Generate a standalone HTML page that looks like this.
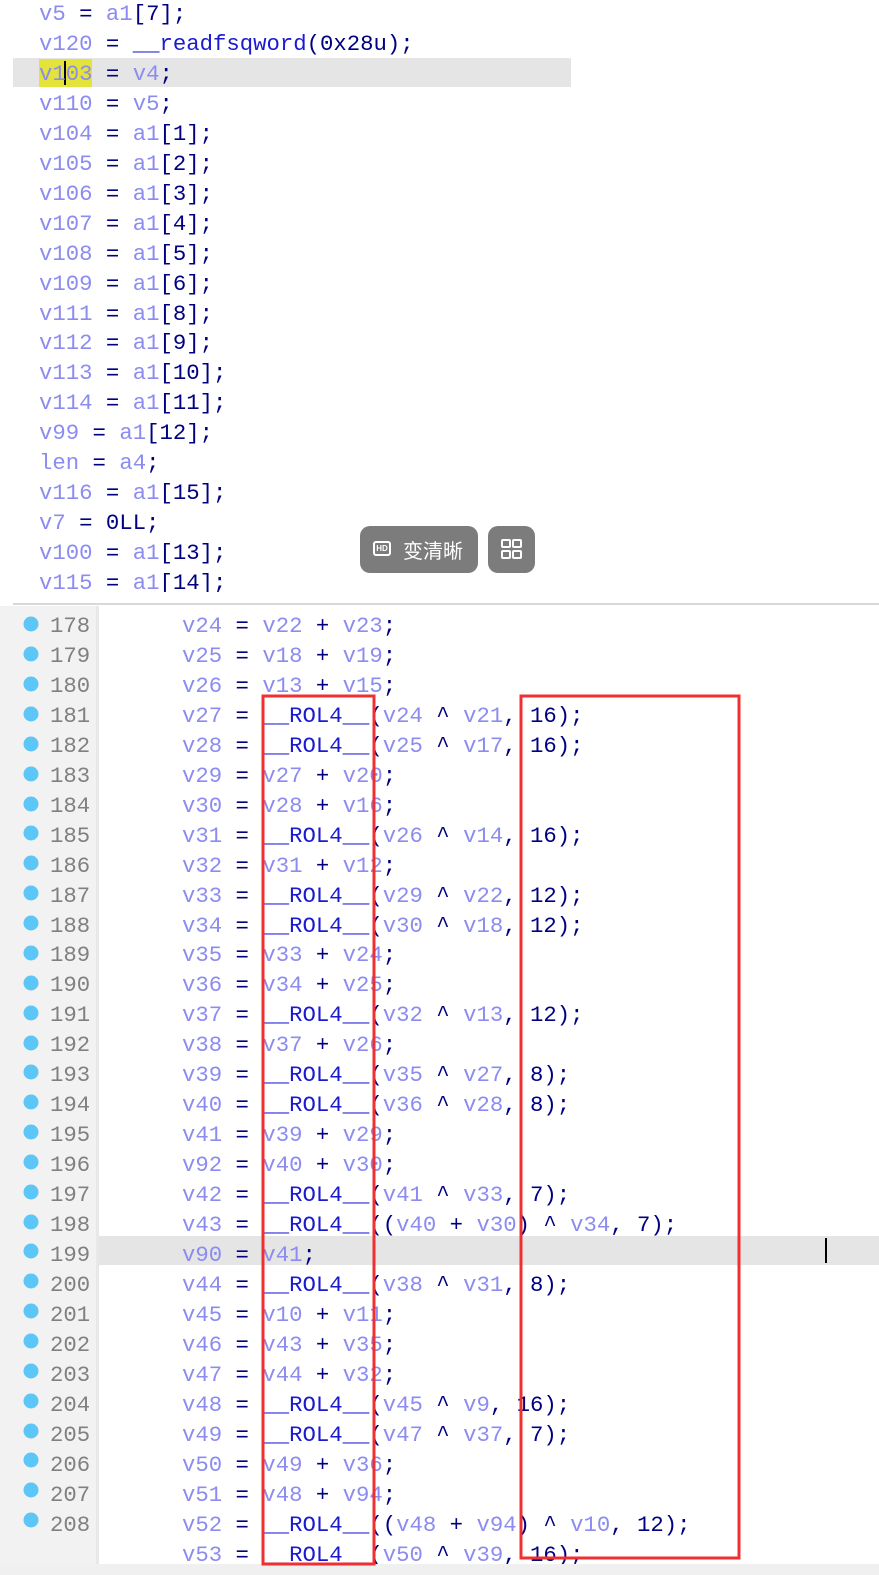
<!DOCTYPE html>
<html><head><meta charset="utf-8"><style>
body{margin:0;width:879px;height:1575px;background:#fff;overflow:hidden;position:relative;font-family:"Liberation Mono",monospace;font-size:22.3px;}
.blk{position:absolute;white-space:pre;line-height:29.95px;}
.v{color:#8c8cf0}.p{color:#000080}.f{color:#1a1ad0}
.ln{color:#808080}
</style></head><body>
<div style="position:absolute;left:13px;top:58px;width:558px;height:29px;background:#e5e5e5"></div>
<div style="position:absolute;left:39px;top:59px;width:53px;height:28px;background:#e3e33a"></div>
<div style="position:absolute;left:64px;top:61px;width:2px;height:24px;background:#000"></div>
<div class="blk" style="left:39px;top:0px"><span class="v">v5</span><span class="p"> = </span><span class="v">a1</span><span class="p">[7];</span>
<span class="v">v120</span><span class="p"> = </span><span class="f">__readfsqword</span><span class="p">(0x28u);</span>
<span class="v">v103</span><span class="p"> = </span><span class="v">v4</span><span class="p">;</span>
<span class="v">v110</span><span class="p"> = </span><span class="v">v5</span><span class="p">;</span>
<span class="v">v104</span><span class="p"> = </span><span class="v">a1</span><span class="p">[1];</span>
<span class="v">v105</span><span class="p"> = </span><span class="v">a1</span><span class="p">[2];</span>
<span class="v">v106</span><span class="p"> = </span><span class="v">a1</span><span class="p">[3];</span>
<span class="v">v107</span><span class="p"> = </span><span class="v">a1</span><span class="p">[4];</span>
<span class="v">v108</span><span class="p"> = </span><span class="v">a1</span><span class="p">[5];</span>
<span class="v">v109</span><span class="p"> = </span><span class="v">a1</span><span class="p">[6];</span>
<span class="v">v111</span><span class="p"> = </span><span class="v">a1</span><span class="p">[8];</span>
<span class="v">v112</span><span class="p"> = </span><span class="v">a1</span><span class="p">[9];</span>
<span class="v">v113</span><span class="p"> = </span><span class="v">a1</span><span class="p">[10];</span>
<span class="v">v114</span><span class="p"> = </span><span class="v">a1</span><span class="p">[11];</span>
<span class="v">v99</span><span class="p"> = </span><span class="v">a1</span><span class="p">[12];</span>
<span class="v">len</span><span class="p"> = </span><span class="v">a4</span><span class="p">;</span>
<span class="v">v116</span><span class="p"> = </span><span class="v">a1</span><span class="p">[15];</span>
<span class="v">v7</span><span class="p"> = 0LL;</span>
<span class="v">v100</span><span class="p"> = </span><span class="v">a1</span><span class="p">[13];</span>
<span class="v">v115</span><span class="p"> = </span><span class="v">a1</span><span class="p">[14];</span></div>
<div style="position:absolute;left:0;top:592px;width:879px;height:13px;background:#fff"></div>
<div style="position:absolute;left:360px;top:526px;width:118px;height:47px;border-radius:10px;background:#7c7c7c;color:#fff;font-family:'Noto Sans CJK SC',sans-serif;font-size:20px;line-height:47px">
<span style="position:absolute;left:13px;top:15px;width:18px;height:15px;border:2px solid #fff;border-radius:3px;box-sizing:border-box;font-size:8px;line-height:11px;text-align:center;font-family:'Liberation Sans',sans-serif;font-weight:bold">HD</span>
<span style="position:absolute;left:43px">变清晰</span></div>
<div style="position:absolute;left:488px;top:526px;width:47px;height:47px;border-radius:10px;background:#7c7c7c">
<svg width="47" height="47"><g fill="none" stroke="#fff" stroke-width="2"><rect x="14" y="14" width="8" height="7" rx="1"/><rect x="25" y="14" width="8" height="7" rx="1"/><rect x="14" y="25" width="8" height="7" rx="1"/><rect x="25" y="25" width="8" height="7" rx="1"/></g></svg></div>
<div style="position:absolute;left:13px;top:603px;width:866px;height:2px;background:#d8d8d8"></div>
<div style="position:absolute;left:0;top:606px;width:96px;height:969px;background:#f2f2f2"></div>
<div style="position:absolute;left:96px;top:606px;width:3px;height:969px;background:#e8e8e8"></div>
<div style="position:absolute;left:99px;top:1236px;width:780px;height:29px;background:#e5e5e5"></div>
<div style="position:absolute;left:825px;top:1238px;width:2px;height:25px;background:#000"></div>
<div class="blk ln" style="left:50px;top:612px">178
179
180
181
182
183
184
185
186
187
188
189
190
191
192
193
194
195
196
197
198
199
200
201
202
203
204
205
206
207
208</div>
<div class="blk" style="left:182px;top:612px"><span class="v">v24</span><span class="p"> = </span><span class="v">v22</span><span class="p"> + </span><span class="v">v23</span><span class="p">;</span>
<span class="v">v25</span><span class="p"> = </span><span class="v">v18</span><span class="p"> + </span><span class="v">v19</span><span class="p">;</span>
<span class="v">v26</span><span class="p"> = </span><span class="v">v13</span><span class="p"> + </span><span class="v">v15</span><span class="p">;</span>
<span class="v">v27</span><span class="p"> = </span><span class="f">__ROL4__</span><span class="p">(</span><span class="v">v24</span><span class="p"> ^ </span><span class="v">v21</span><span class="p">, 16);</span>
<span class="v">v28</span><span class="p"> = </span><span class="f">__ROL4__</span><span class="p">(</span><span class="v">v25</span><span class="p"> ^ </span><span class="v">v17</span><span class="p">, 16);</span>
<span class="v">v29</span><span class="p"> = </span><span class="v">v27</span><span class="p"> + </span><span class="v">v20</span><span class="p">;</span>
<span class="v">v30</span><span class="p"> = </span><span class="v">v28</span><span class="p"> + </span><span class="v">v16</span><span class="p">;</span>
<span class="v">v31</span><span class="p"> = </span><span class="f">__ROL4__</span><span class="p">(</span><span class="v">v26</span><span class="p"> ^ </span><span class="v">v14</span><span class="p">, 16);</span>
<span class="v">v32</span><span class="p"> = </span><span class="v">v31</span><span class="p"> + </span><span class="v">v12</span><span class="p">;</span>
<span class="v">v33</span><span class="p"> = </span><span class="f">__ROL4__</span><span class="p">(</span><span class="v">v29</span><span class="p"> ^ </span><span class="v">v22</span><span class="p">, 12);</span>
<span class="v">v34</span><span class="p"> = </span><span class="f">__ROL4__</span><span class="p">(</span><span class="v">v30</span><span class="p"> ^ </span><span class="v">v18</span><span class="p">, 12);</span>
<span class="v">v35</span><span class="p"> = </span><span class="v">v33</span><span class="p"> + </span><span class="v">v24</span><span class="p">;</span>
<span class="v">v36</span><span class="p"> = </span><span class="v">v34</span><span class="p"> + </span><span class="v">v25</span><span class="p">;</span>
<span class="v">v37</span><span class="p"> = </span><span class="f">__ROL4__</span><span class="p">(</span><span class="v">v32</span><span class="p"> ^ </span><span class="v">v13</span><span class="p">, 12);</span>
<span class="v">v38</span><span class="p"> = </span><span class="v">v37</span><span class="p"> + </span><span class="v">v26</span><span class="p">;</span>
<span class="v">v39</span><span class="p"> = </span><span class="f">__ROL4__</span><span class="p">(</span><span class="v">v35</span><span class="p"> ^ </span><span class="v">v27</span><span class="p">, 8);</span>
<span class="v">v40</span><span class="p"> = </span><span class="f">__ROL4__</span><span class="p">(</span><span class="v">v36</span><span class="p"> ^ </span><span class="v">v28</span><span class="p">, 8);</span>
<span class="v">v41</span><span class="p"> = </span><span class="v">v39</span><span class="p"> + </span><span class="v">v29</span><span class="p">;</span>
<span class="v">v92</span><span class="p"> = </span><span class="v">v40</span><span class="p"> + </span><span class="v">v30</span><span class="p">;</span>
<span class="v">v42</span><span class="p"> = </span><span class="f">__ROL4__</span><span class="p">(</span><span class="v">v41</span><span class="p"> ^ </span><span class="v">v33</span><span class="p">, 7);</span>
<span class="v">v43</span><span class="p"> = </span><span class="f">__ROL4__</span><span class="p">((</span><span class="v">v40</span><span class="p"> + </span><span class="v">v30</span><span class="p">) ^ </span><span class="v">v34</span><span class="p">, 7);</span>
<span class="v">v90</span><span class="p"> = </span><span class="v">v41</span><span class="p">;</span>
<span class="v">v44</span><span class="p"> = </span><span class="f">__ROL4__</span><span class="p">(</span><span class="v">v38</span><span class="p"> ^ </span><span class="v">v31</span><span class="p">, 8);</span>
<span class="v">v45</span><span class="p"> = </span><span class="v">v10</span><span class="p"> + </span><span class="v">v11</span><span class="p">;</span>
<span class="v">v46</span><span class="p"> = </span><span class="v">v43</span><span class="p"> + </span><span class="v">v35</span><span class="p">;</span>
<span class="v">v47</span><span class="p"> = </span><span class="v">v44</span><span class="p"> + </span><span class="v">v32</span><span class="p">;</span>
<span class="v">v48</span><span class="p"> = </span><span class="f">__ROL4__</span><span class="p">(</span><span class="v">v45</span><span class="p"> ^ </span><span class="v">v9</span><span class="p">, 16);</span>
<span class="v">v49</span><span class="p"> = </span><span class="f">__ROL4__</span><span class="p">(</span><span class="v">v47</span><span class="p"> ^ </span><span class="v">v37</span><span class="p">, 7);</span>
<span class="v">v50</span><span class="p"> = </span><span class="v">v49</span><span class="p"> + </span><span class="v">v36</span><span class="p">;</span>
<span class="v">v51</span><span class="p"> = </span><span class="v">v48</span><span class="p"> + </span><span class="v">v94</span><span class="p">;</span>
<span class="v">v52</span><span class="p"> = </span><span class="f">__ROL4__</span><span class="p">((</span><span class="v">v48</span><span class="p"> + </span><span class="v">v94</span><span class="p">) ^ </span><span class="v">v10</span><span class="p">, 12);</span>
<span class="v">v53</span><span class="p"> = </span><span class="f">__ROL4__</span><span class="p">(</span><span class="v">v50</span><span class="p"> ^ </span><span class="v">v39</span><span class="p">, 16);</span></div>
<div style="position:absolute;left:0;top:1564px;width:879px;height:11px;background:#f0f0f0"></div>
<svg style="position:absolute;left:0;top:0" width="879" height="1575">
<g fill="#5cc6f6">
<circle cx="31" cy="624" r="7.5"/><circle cx="31" cy="654" r="7.5"/><circle cx="31" cy="684" r="7.5"/><circle cx="31" cy="714" r="7.5"/><circle cx="31" cy="744" r="7.5"/><circle cx="31" cy="774" r="7.5"/><circle cx="31" cy="804" r="7.5"/><circle cx="31" cy="833" r="7.5"/><circle cx="31" cy="863" r="7.5"/><circle cx="31" cy="893" r="7.5"/><circle cx="31" cy="923" r="7.5"/><circle cx="31" cy="953" r="7.5"/><circle cx="31" cy="983" r="7.5"/><circle cx="31" cy="1013" r="7.5"/><circle cx="31" cy="1043" r="7.5"/><circle cx="31" cy="1072" r="7.5"/><circle cx="31" cy="1102" r="7.5"/><circle cx="31" cy="1132" r="7.5"/><circle cx="31" cy="1162" r="7.5"/><circle cx="31" cy="1192" r="7.5"/><circle cx="31" cy="1222" r="7.5"/><circle cx="31" cy="1251" r="7.5"/><circle cx="31" cy="1281" r="7.5"/><circle cx="31" cy="1311" r="7.5"/><circle cx="31" cy="1341" r="7.5"/><circle cx="31" cy="1371" r="7.5"/><circle cx="31" cy="1401" r="7.5"/><circle cx="31" cy="1431" r="7.5"/><circle cx="31" cy="1460" r="7.5"/><circle cx="31" cy="1490" r="7.5"/><circle cx="31" cy="1520" r="7.5"/>
</g>
<rect x="263" y="696" width="111" height="868" fill="none" stroke="#f03030" stroke-width="3"/>
<rect x="521" y="696" width="218" height="862" fill="none" stroke="#f03030" stroke-width="3"/>
</svg>
</body></html>
